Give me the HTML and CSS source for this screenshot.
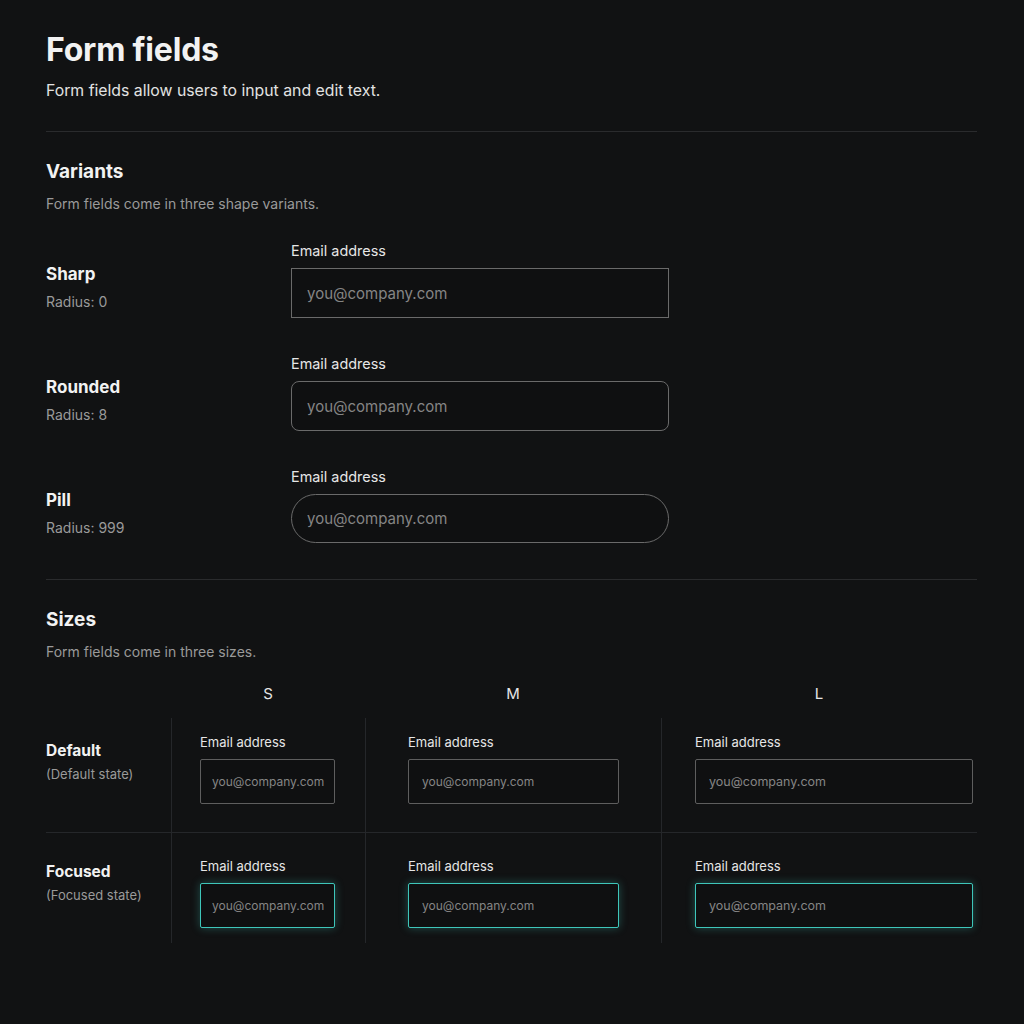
FILE: index.html
```html
<!DOCTYPE html>
<html lang="en">
<head>
    <meta charset="UTF-8">
    <meta name="viewport" content="width=device-width, initial-scale=1.0">
    <title>Form fields</title>
    <link rel="stylesheet" href="styles.css">
</head>
<body>
    <div class="page">
        <h1>Form fields</h1>
        <p class="lead">Form fields allow users to input and edit text.</p>

        <hr class="divider">

        <section class="section">
            <h2>Variants</h2>
            <p class="desc">Form fields come in three shape variants.</p>

            <div class="variant">
                <div class="variant-name">
                    <div class="name">Sharp</div>
                    <div class="sub">Radius: 0</div>
                </div>
                <div class="field">
                    <label>Email address</label>
                    <input type="email" class="input input-lg sharp" placeholder="you@company.com">
                </div>
            </div>

            <div class="variant">
                <div class="variant-name">
                    <div class="name">Rounded</div>
                    <div class="sub">Radius: 8</div>
                </div>
                <div class="field">
                    <label>Email address</label>
                    <input type="email" class="input input-lg rounded" placeholder="you@company.com">
                </div>
            </div>

            <div class="variant">
                <div class="variant-name">
                    <div class="name">Pill</div>
                    <div class="sub">Radius: 999</div>
                </div>
                <div class="field">
                    <label>Email address</label>
                    <input type="email" class="input input-lg pill" placeholder="you@company.com">
                </div>
            </div>
        </section>

        <hr class="divider divider-wide">

        <section class="section">
            <h2>Sizes</h2>
            <p class="desc">Form fields come in three sizes.</p>

            <div class="sizes">
                <div class="head"></div>
                <div class="head">S</div>
                <div class="head">M</div>
                <div class="head">L</div>

                <div class="cell state row-default">
                    <div class="name">Default</div>
                    <div class="sub">(Default state)</div>
                </div>
                <div class="cell col col-s row-default">
                    <label>Email address</label>
                    <input type="email" class="input input-s" placeholder="you@company.com">
                </div>
                <div class="cell col col-m row-default">
                    <label>Email address</label>
                    <input type="email" class="input input-m" placeholder="you@company.com">
                </div>
                <div class="cell col col-l row-default">
                    <label>Email address</label>
                    <input type="email" class="input input-l" placeholder="you@company.com">
                </div>

                <div class="cell state row-focused">
                    <div class="name">Focused</div>
                    <div class="sub">(Focused state)</div>
                </div>
                <div class="cell col col-s row-focused">
                    <label>Email address</label>
                    <input type="email" class="input input-s focused" placeholder="you@company.com">
                </div>
                <div class="cell col col-m row-focused">
                    <label>Email address</label>
                    <input type="email" class="input input-m focused" placeholder="you@company.com">
                </div>
                <div class="cell col col-l row-focused">
                    <label>Email address</label>
                    <input type="email" class="input input-l focused" placeholder="you@company.com">
                </div>
            </div>
        </section>
    </div>
</body>
</html>
```

FILE: styles.css
```css
body {
    background-color: #111213;
    color: #ededed;
    font-family: Inter, "Liberation Sans", sans-serif;
    margin: 0;
    padding: 0;
    min-height: 1024px;
}
.page {
    padding: 30px 47px 0 46px;
}
h1 {
    font-size: 32px;
    line-height: 40px;
    font-weight: 700;
    letter-spacing: -0.2px;
    color: #f2f2f2;
    margin: 0;
}
.lead {
    font-size: 15.8px;
    line-height: 20px;
    color: #e2e2e2;
    margin: 11px 0 0;
}
.divider {
    border: none;
    border-top: 1px solid #2a2b2d;
    margin: 30px 0 0;
}
.divider-wide {
    margin-top: 36px;
}
.section h2 {
    font-size: 19px;
    line-height: 28px;
    font-weight: 700;
    color: #f2f2f2;
    margin: 26px 0 0;
}
.desc {
    font-size: 14px;
    line-height: 20px;
    color: #9a9a9a;
    margin: 8px 0 0;
}

/* variants */
.variant {
    display: flex;
    margin-top: 36px;
}
.variant:first-of-type {
    margin-top: 27px;
}
.variant-name {
    width: 245px;
    padding-top: 21px;
}
.name {
    font-size: 17px;
    line-height: 24px;
    font-weight: 700;
    color: #f2f2f2;
}
.sub {
    font-size: 14px;
    line-height: 20px;
    color: #9a9a9a;
    margin-top: 6px;
}
.field label {
    display: block;
    font-size: 14.4px;
    line-height: 20px;
    color: #e6e6e6;
    margin-bottom: 7px;
}
.input {
    display: block;
    box-sizing: border-box;
    background-color: #0f1011;
    border: 1px solid #6a6a6a;
    color: #ddd;
    font-family: Inter, "Liberation Sans", sans-serif;
    outline: none;
}
.input::placeholder {
    color: #858585;
}
.input-lg {
    width: 378px;
    height: 50px;
    padding: 0 15px;
    font-size: 15px;
}
.sharp {
    border-radius: 0;
}
.rounded {
    border-radius: 8px;
}
.pill {
    border-radius: 999px;
    height: 49px;
}

/* sizes */
.sizes {
    display: grid;
    grid-template-columns: 125px 194px 296px 316px;
    margin-top: 22px;
}
.head {
    text-align: center;
    font-size: 15px;
    line-height: 20px;
    color: #e6e6e6;
    padding-bottom: 14px;
}
.cell label {
    display: block;
    font-size: 13px;
    line-height: 18px;
    color: #e6e6e6;
    margin-bottom: 8px;
}
.col {
    border-left: 1px solid #25272a;
}
.row-default {
    padding-top: 15px;
    padding-bottom: 28px;
    border-bottom: 1px solid #25272a;
}
.row-focused {
    padding-top: 24px;
    padding-bottom: 15px;
}
.state {
    padding-top: 22px;
}
.state.row-focused {
    padding-top: 28px;
}
.state .name {
    font-size: 15.5px;
    line-height: 22px;
}
.state .sub {
    margin-top: 2px;
    font-size: 13px;
}
.col-s {
    padding-left: 28px;
}
.col-m {
    padding-left: 42px;
}
.col-l {
    padding-left: 33px;
}
.input-s,
.input-m,
.input-l {
    height: 45px;
    font-size: 12px;
    border-color: #5e5e5e;
    border-radius: 2px;
}
.input-s {
    width: 135px;
    padding: 0 6px 0 11px;
}
.input-m {
    width: 211px;
    padding: 0 13px;
}
.input-l {
    width: 278px;
    padding: 0 13px;
    font-size: 12.5px;
}
.focused {
    border-color: #3ec6ba;
    box-shadow: 0 0 8px rgba(62, 198, 186, 0.35);
}
```
